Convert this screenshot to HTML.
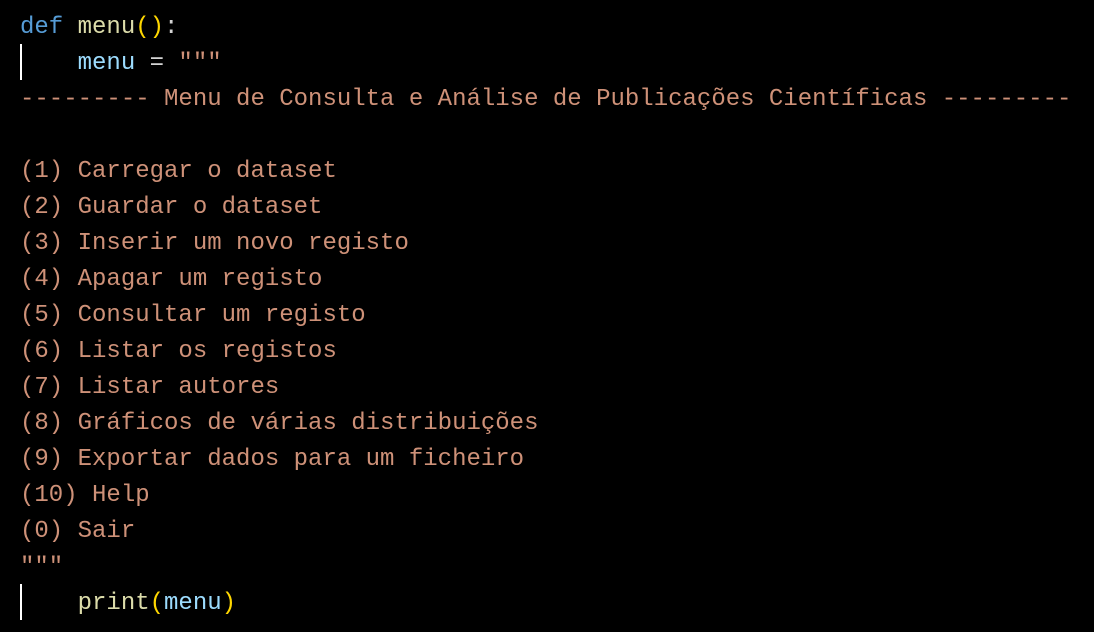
<!DOCTYPE html>
<html><head><meta charset="utf-8"><style>
html,body{margin:0;padding:0;background:#000;width:1094px;height:632px;overflow:hidden}
pre{margin:0;position:absolute;left:20px;top:10px;font-family:"Liberation Mono",monospace;font-size:24px;line-height:36px;color:#ce9178}
.k{color:#569cd6}.f{color:#dcdcaa}.p{color:#ffd700}.v{color:#9cdcfe}.w{color:#d4d4d4}
.g{position:absolute;left:20px;width:2px;background:#fff;height:36px}
</style></head><body>
<div class="g" style="top:44px"></div>
<div class="g" style="top:584px"></div>
<pre><span class="k">def</span> <span class="f">menu</span><span class="p">()</span><span class="w">:</span>
    <span class="v">menu</span> <span class="w">=</span> """
--------- Menu de Consulta e Análise de Publicações Científicas ---------

(1) Carregar o dataset
(2) Guardar o dataset
(3) Inserir um novo registo
(4) Apagar um registo
(5) Consultar um registo
(6) Listar os registos
(7) Listar autores
(8) Gráficos de várias distribuições
(9) Exportar dados para um ficheiro
(10) Help
(0) Sair
"""
    <span class="f">print</span><span class="p">(</span><span class="v">menu</span><span class="p">)</span></pre>
</body></html>
